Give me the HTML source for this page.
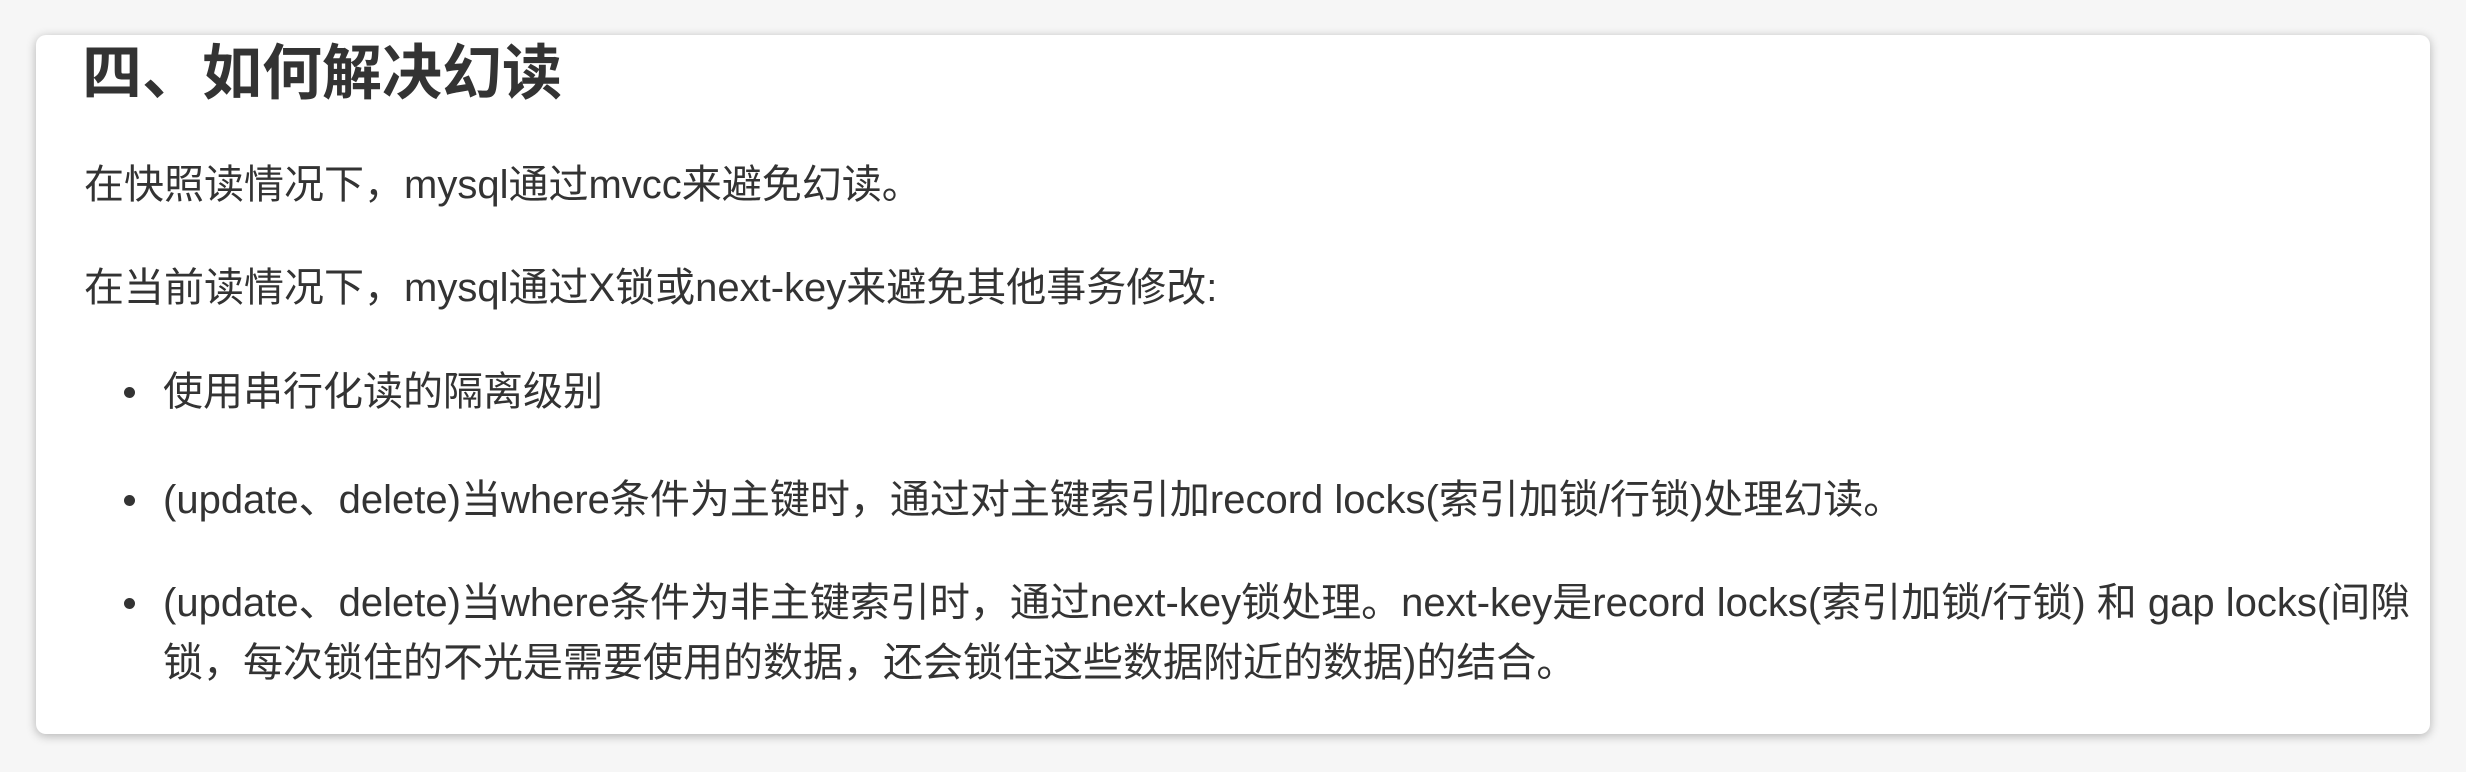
<!DOCTYPE html>
<html><head><meta charset="utf-8"><style>
html,body{margin:0;padding:0}
body{width:2466px;height:772px;background:#f6f6f6;position:relative;overflow:hidden;font-family:"Liberation Sans","Noto Sans CJK SC",sans-serif;color:#333}
.card{position:absolute;left:36px;top:35px;width:2394px;height:699px;background:#fff;border-radius:10px;box-shadow:0 2px 10px rgba(0,0,0,.28)}
.l{position:absolute;left:84px;height:60px;line-height:60px;font-size:40px;white-space:nowrap}
.h{position:absolute;left:82px;top:39px;font-size:60px;font-weight:bold;line-height:70px;white-space:nowrap}
.b{position:absolute;left:124px;width:11px;height:11px;border-radius:50%;background:#333}
.li{left:163px}
</style></head><body>
<div class="card"></div>
<div class="h">四、如何解决幻读</div>
<div class="l" style="top:155px">在快照读情况下，mysql通过mvcc来避免幻读。</div>
<div class="l" style="top:258px">在当前读情况下，mysql通过X锁或next-key来避免其他事务修改:</div>
<div class="b" style="top:387px"></div>
<div class="l li" style="top:362px">使用串行化读的隔离级别</div>
<div class="b" style="top:495px"></div>
<div class="l li" style="top:470px">(update、delete)当where条件为主键时，通过对主键索引加record locks(索引加锁/行锁)处理幻读。</div>
<div class="b" style="top:598px"></div>
<div class="l li" style="top:573px">(update、delete)当where条件为非主键索引时，通过next-key锁处理。next-key是record locks(索引加锁/行锁) 和 gap locks(间隙</div>
<div class="l li" style="top:633px">锁，每次锁住的不光是需要使用的数据，还会锁住这些数据附近的数据)的结合。</div>
</body></html>
